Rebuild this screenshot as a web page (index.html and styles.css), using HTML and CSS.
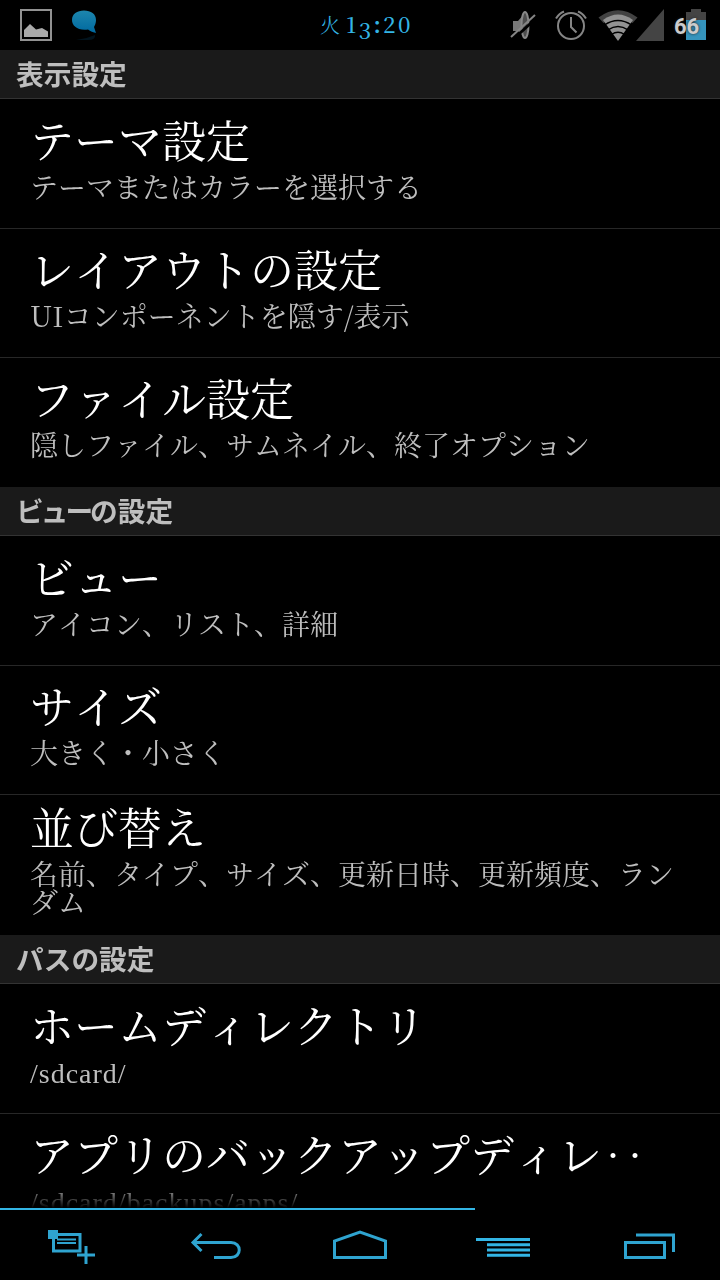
FILE: index.html
```html
<!DOCTYPE html>
<html lang="ja">
<head>
	<meta charset="UTF-8">
	<title>設定</title>
	<link rel="stylesheet" href="styles.css">
</head>
<body>
	<header class="statusbar">
		<div class="notifications">
			<svg width="34" height="34" viewBox="0 0 34 34">
				<rect x="2" y="2" width="30" height="30" fill="none" stroke="#929292" stroke-width="2"/>
				<path d="M5 29V22L11 16L17 21.500L23 20L29 23.500V29Z" fill="#aaa"/>
			</svg>
			<svg class="talk" width="26" height="34" viewBox="0 0 26 34">
				<defs>
					<linearGradient id="bubble" x1="0" y1="0" x2="0" y2="1">
						<stop offset="0" stop-color="#1d86ad"/>
						<stop offset="1" stop-color="#0069a0"/>
					</linearGradient>
				</defs>
				<path d="M12 2.500C19 2.500 24 6 24 12C24 15 23 17 22 19L24 25C20 24 18 23 16 21.500C6 23 0 18 0 12C0 6 5 2.500 12 2.500Z" fill="url(#bubble)"/>
				<path d="M4 32Q14 31 23 27Q24 32 16 32Z" fill="#02131d"/>
			</svg>
		</div>
		<div class="clock"><span class="day">火</span><span>1</span><span class="low">3</span><span class="colon">:</span><span>20</span></div>
		<div class="indicators">
			<svg class="mute" width="28" height="32" viewBox="0 0 28 32">
				<path d="M3 12H8L14 5V27L8 22H3Z" fill="#777"/>
				<ellipse cx="15" cy="16" rx="3.500" ry="13" fill="#4d4d4d" stroke="#888" stroke-width="2"/>
				<path d="M3 30.500L27 8.500" stroke="#000" stroke-width="3"/>
				<path d="M1 28L25 6" stroke="#858585" stroke-width="2"/>
			</svg>
			<svg class="alarm" width="34" height="32" viewBox="0 0 34 32" fill="none" stroke="#858585" stroke-width="2">
				<circle cx="17" cy="17" r="13"/>
				<path d="M17 8V18L22.500 23.500M2 9.500Q5 4.500 10 2.500M32 9.500Q29 4.500 24 2.500"/>
			</svg>
			<svg class="wifi" width="40" height="32" viewBox="0 0 40 32" fill="none">
				<path d="M0.500 8.500Q20 -6 39.500 8.500L34.500 14Q20 4 5.500 14Z" fill="#424242"/>
				<path d="M5 11Q20 0 35 11L20 32Z" fill="#929292"/>
				<path d="M6.500 16Q20 7 33.500 16M10 20.800Q20 14 30 20.800M13.500 25.500Q20 21 26.500 25.500" stroke="#000" stroke-width="1.500"/>
			</svg>
			<svg width="29" height="32" viewBox="0 0 29 32">
				<path d="M0 32L28 0V32Z" fill="#444"/>
			</svg>
			<div class="battery">
				<svg width="20" height="31" viewBox="0 0 20 31">
					<path d="M0 3H5V0H15V3H20V31H0Z" fill="#444"/>
					<rect y="11" width="20" height="20" fill="#3594bd"/>
				</svg>
				<span class="level">66</span>
			</div>
		</div>
	</header>

	<main class="settings">
		<h2 class="category">表示設定</h2>
		<ul>
			<li>
				<div class="title">テーマ設定</div>
				<div class="summary">テーマまたはカラーを選択する</div>
			</li>
			<li>
				<div class="title">レイアウトの設定</div>
				<div class="summary">UIコンポーネントを隠す/表示</div>
			</li>
			<li>
				<div class="title">ファイル設定</div>
				<div class="summary">隠しファイル、サムネイル、終了オプション</div>
			</li>
		</ul>
		<h2 class="category"><span class="kana">ビュー</span>の設定</h2>
		<ul>
			<li>
				<div class="title">ビュー</div>
				<div class="summary">アイコン、リスト、詳細</div>
			</li>
			<li>
				<div class="title">サイズ</div>
				<div class="summary">大きく・小さく</div>
			</li>
			<li class="tall">
				<div class="title">並び替え</div>
				<div class="summary">名前、タイプ、サイズ、更新日時、更新頻度、ランダム</div>
			</li>
		</ul>
		<h2 class="category">パスの設定</h2>
		<ul>
			<li>
				<div class="title">ホームディレクトリ</div>
				<div class="summary path">/sdcard/</div>
			</li>
			<li>
				<div class="title">アプリのバックアップディレ‥</div>
				<div class="summary path">/sdcard/backups/apps/</div>
			</li>
		</ul>
	</main>

	<div class="progress"></div>
	<nav class="navbar">
		<svg viewBox="0 0 144 70">
			<rect x="53.500" y="24.500" width="26.500" height="16.500"/>
			<path d="M57 29.500H76M57 33H76" stroke-width="2"/>
			<path d="M86 36V54M77 45H95"/>
			<rect class="solid" x="48" y="20" width="10" height="9"/>
		</svg>
		<svg viewBox="0 0 144 70">
			<path d="M57.500 24L49 32.500L57.500 41M49 32.500H87C98 32.500 98 47.500 87 47.500H70"/>
		</svg>
		<svg viewBox="0 0 144 70">
			<path d="M46.500 47.500V31L72 22L97.500 31V47.500Z"/>
		</svg>
		<svg viewBox="0 0 144 70">
			<path d="M44 29.500H98M55 34.700H98M55 40H98M55 45.300H98" stroke="#33b5e5"/>
		</svg>
		<svg viewBox="0 0 144 70">
			<rect x="49.500" y="32.500" width="39" height="15"/>
			<path d="M60 25H97.500V42"/>
		</svg>
	</nav>
</body>
</html>
```
FILE: styles.css
```css
*{
	box-sizing: border-box;
}
body{
	margin: 0;
	width: 720px;
	height: 1280px;
	overflow: hidden;
	display: flex;
	flex-direction: column;
	background-color: #000;
	color: #fff;
	font-family: "Noto Serif CJK JP", "Noto Sans CJK JP", serif;
	font-kerning: none;
}
svg{
	display: block;
	flex: none;
}
.statusbar{
	height: 50px;
	flex: none;
	display: grid;
	grid-template-columns: 320px 180px 220px;
}
.notifications{
	display: flex;
	padding: 8px 0 0 19px;
}
.talk{
	margin-left: 19px;
}
.clock{
	display: flex;
	align-items: baseline;
	color: #33b5e5;
	font-size: 22px;
	font-weight: 500;
	line-height: 48px;
	letter-spacing: 2.300px;
}
.day{
	font-size: 20px;
	font-weight: 300;
	margin-right: 6px;
	letter-spacing: 0;
}
.low{
	position: relative;
	top: 6px;
}
.colon{
	font-weight: bold;
}
.indicators{
	display: flex;
	padding-top: 9px;
}
.mute{
	margin-left: 10px;
}
.alarm{
	margin-left: 16px;
}
.wifi{
	margin-left: 10px;
	margin-right: -2px;
}
.battery{
	position: relative;
	margin-left: 21px;
}
.level{
	position: absolute;
	left: -12px;
	top: 4px;
	color: #ccc;
	font: bold 22px/28px Roboto, sans-serif;
	text-shadow: 0 0 3px #222;
}
.settings{
	height: 1158px;
	flex: none;
	overflow: hidden;
	-webkit-mask-image: linear-gradient(to top, transparent, #000 24px);
	mask-image: linear-gradient(to top, transparent, #000 24px);
}
.category{
	margin: 0;
	height: 49px;
	padding-left: 16px;
	background-color: #1a1a1a;
	border-bottom: 1px solid #333;
	color: #bebebe;
	font: bold 27.700px/47px "Noto Sans CJK JP", sans-serif;
}
.kana{
	letter-spacing: -3px;
}
ul{
	margin: 0;
	padding: 0;
	list-style: none;
}
li{
	height: 129px;
	padding: 15px 30px 0 30px;
}
li + li{
	border-top: 1px solid #272727;
	padding-top: 14px;
}
li:last-child{
	height: 130px;
}
li.tall{
	height: 141px;
	padding-top: 6px;
}
.title{
	font-size: 44px;
	line-height: 50px;
	font-weight: 400;
	white-space: nowrap;
}
.summary{
	margin-top: 8px;
	color: #bebebe;
	font-size: 28px;
	line-height: 28px;
	font-weight: 400;
}
.path{
	margin-top: 11px;
	font-family: "Liberation Serif", serif;
	letter-spacing: 1px;
}
.progress{
	width: 475px;
	height: 2px;
	flex: none;
	background-color: #33b5e5;
}
.navbar{
	height: 70px;
	display: grid;
	grid-template-columns: repeat(5, 1fr);
}
.navbar svg{
	width: 144px;
	height: 70px;
	fill: none;
	stroke: #2fa4d0;
	stroke-width: 3;
}
.navbar .solid{
	fill: #2fa4d0;
	stroke: none;
}
```
